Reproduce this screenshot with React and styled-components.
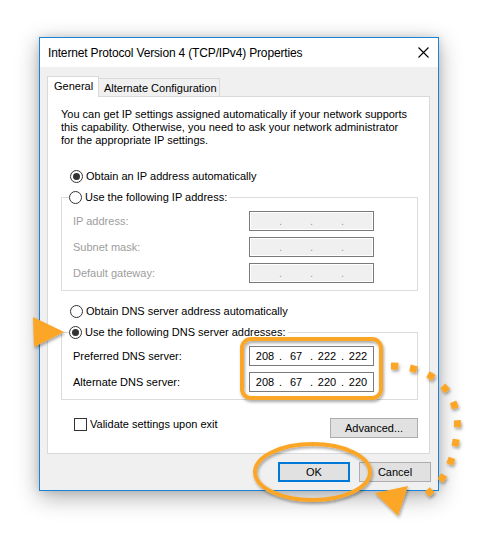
import React from "react";
import styled, { createGlobalStyle } from "styled-components";

const GlobalStyle = createGlobalStyle`
  html, body { margin: 0; padding: 0; background: #ffffff; }
  body {
    font-family: "Liberation Sans", Arial, sans-serif;
    font-size: 11px;
    color: #000;
  }
  * { box-sizing: border-box; }
`;

const ORANGE = "#fba626";

const Stage = styled.div`
  position: relative;
  width: 479px;
  height: 536px;
  overflow: hidden;
  padding: 37px 0 0 39px;
`;

const Window = styled.div`
  width: 400px;
  height: 454px;
  border: 1px solid #1883d7;
  background: #f0f0f0;
  box-shadow: 0 6px 22px rgba(0, 0, 0, 0.32), 0 0 8px rgba(0, 0, 0, 0.12);
  display: flex;
  flex-direction: column;
`;

const TitleBar = styled.div`
  height: 29px;
  flex: none;
  background: #ffffff;
  display: flex;
  align-items: center;
  justify-content: space-between;
  padding: 0 9px 0 8px;
`;

const Title = styled.span`
  font-size: 12px;
  letter-spacing: -0.16px;
  line-height: 14px;
  color: #000;
  white-space: nowrap;
`;

const CloseIcon = styled.svg`
  width: 11px;
  height: 11px;
  display: block;
`;

const Body = styled.div`
  flex: 1;
  display: flex;
  flex-direction: column;
  padding: 9px 8px 0 7px;
`;

const TabStrip = styled.div`
  display: flex;
  align-items: flex-end;
  height: 21px;
  position: relative;
  z-index: 1;
  margin-bottom: -1px;
`;

const Tab = styled.div`
  width: ${(p) => p.$w}px;
  height: ${(p) => (p.$active ? 21 : 18)}px;
  margin-bottom: ${(p) => (p.$active ? 0 : 1)}px;
  margin-left: ${(p) => (p.$active ? 0 : -1)}px;
  border: 1px solid #d9d9d9;
  border-bottom: none;
  background: ${(p) => (p.$active ? "#ffffff" : "#f0f0f0")};
  padding: ${(p) => (p.$active ? "2px 0 0 6px" : "2px 0 0 5px")};
  line-height: 14px;
  white-space: nowrap;
`;

const Panel = styled.div`
  height: 358px;
  border: 1px solid #d9d9d9;
  background: #ffffff;
  padding: 11px 11px 0 13px;
  display: flex;
  flex-direction: column;
`;

const Description = styled.p`
  margin: 0;
  line-height: 13px;
  white-space: nowrap;
`;

const RadioRow = styled.label`
  display: flex;
  align-items: center;
  height: 14px;
  margin-top: ${(p) => p.$mt || 0}px;
  margin-left: ${(p) => p.$ml || 0}px;
  white-space: nowrap;
  line-height: 14px;
`;

const RadioCircle = styled.span`
  width: 13px;
  height: 13px;
  border-radius: 50%;
  border: 1px solid #333;
  background: #fff;
  display: flex;
  align-items: center;
  justify-content: center;
  margin-right: 3px;
  flex: none;

  &::after {
    content: "";
    width: 7px;
    height: 7px;
    border-radius: 50%;
    background: ${(p) => (p.$checked ? "#333" : "transparent")};
  }
`;

const Group = styled.fieldset`
  margin: ${(p) => p.$mt || 0}px 0 0 0;
  padding: 0 0 7px 11px;
  border: 1px solid #dcdcdc;
  min-width: 0;
`;

const Legend = styled.legend`
  padding: 0 2px 0 0;
  margin-left: -4px;
  height: 14px;
`;

const FieldRow = styled.div`
  display: flex;
  align-items: center;
  justify-content: space-between;
  height: 20px;
  margin-top: ${(p) => (p.$first ? 7 : 6)}px;
`;

const FieldLabel = styled.span`
  color: ${(p) => (p.$disabled ? "#9d9d9d" : "#000")};
  white-space: nowrap;
`;

const IpBox = styled.div`
  width: 125px;
  height: 20px;
  margin-right: 43px;
  border: 1px solid #7a7a7a;
  background: ${(p) => (p.$disabled ? "#f0f0f0" : "#ffffff")};
  box-shadow: ${(p) => (p.$disabled ? "inset 0 0 0 1px #ffffff" : "none")};
  display: flex;
  align-items: center;
  color: ${(p) => (p.$disabled ? "#9d9d9d" : "#000")};
  line-height: 18px;
`;

const Octet = styled.span`
  flex: 1;
  text-align: center;
`;

const Dot = styled.span`
  width: 1px;
  display: flex;
  justify-content: center;
  overflow: visible;
`;

const BottomRow = styled.div`
  display: flex;
  justify-content: space-between;
  align-items: flex-start;
  margin-top: 18px;
  padding-left: 13px;
`;

const CheckLabel = styled.label`
  display: flex;
  align-items: center;
  height: 13px;
  line-height: 13px;
  white-space: nowrap;
`;

const CheckBox = styled.span`
  width: 13px;
  height: 13px;
  border: 1px solid #333;
  background: #fff;
  margin-right: 3px;
  flex: none;
`;

const Button = styled.button`
  width: ${(p) => p.$w || 72}px;
  height: 20px;
  padding: 0;
  font: inherit;
  font-size: 11px;
  color: #000;
  background: #e1e1e1;
  border: ${(p) => (p.$default ? "2px solid #0078d7" : "1px solid #adadad")};
`;

const ButtonBar = styled.div`
  display: flex;
  justify-content: flex-end;
  gap: 9px;
  margin-top: 8px;
  margin-right: -1px;
`;

const Overlay = styled.svg`
  position: absolute;
  left: 0;
  top: 0;
  width: 479px;
  height: 536px;
  pointer-events: none;
  z-index: 5;
`;

function Ip({ value, disabled }) {
  const parts = value ? value.split(".") : ["", "", "", ""];
  const out = [];
  parts.forEach((p, i) => {
    out.push(<Octet key={"o" + i}>{p}</Octet>);
    if (i < 3) out.push(<Dot key={"d" + i}>.</Dot>);
  });
  return <IpBox $disabled={disabled}>{out}</IpBox>;
}

export default function App() {
  return (
    <>
      <GlobalStyle />
      <Stage>
        <Window>
          <TitleBar>
            <Title>Internet Protocol Version 4 (TCP/IPv4) Properties</Title>
            <CloseIcon viewBox="0 0 11 11">
              <path d="M0.5 0.5 L10.5 10.5 M10.5 0.5 L0.5 10.5" stroke="#000" strokeWidth="1.1" fill="none" />
            </CloseIcon>
          </TitleBar>
          <Body>
            <TabStrip>
              <Tab $active $w={52}>General</Tab>
              <Tab $w={122}>Alternate Configuration</Tab>
            </TabStrip>
            <Panel>
              <Description>
                You can get IP settings assigned automatically if your network supports
                <br />
                this capability. Otherwise, you need to ask your network administrator
                <br />
                for the appropriate IP settings.
              </Description>

              <RadioRow $mt={22} $ml={9}>
                <RadioCircle $checked />
                Obtain an IP address automatically
              </RadioRow>

              <Group $mt={7}>
                <Legend>
                  <RadioRow>
                    <RadioCircle />
                    Use the following IP address:
                  </RadioRow>
                </Legend>
                <FieldRow $first>
                  <FieldLabel $disabled>IP address:</FieldLabel>
                  <Ip disabled />
                </FieldRow>
                <FieldRow>
                  <FieldLabel $disabled>Subnet mask:</FieldLabel>
                  <Ip disabled />
                </FieldRow>
                <FieldRow>
                  <FieldLabel $disabled>Default gateway:</FieldLabel>
                  <Ip disabled />
                </FieldRow>
              </Group>

              <RadioRow $mt={13} $ml={9}>
                <RadioCircle />
                Obtain DNS server address automatically
              </RadioRow>

              <Group $mt={7}>
                <Legend>
                  <RadioRow>
                    <RadioCircle $checked />
                    Use the following DNS server addresses:
                  </RadioRow>
                </Legend>
                <FieldRow $first>
                  <FieldLabel>Preferred DNS server:</FieldLabel>
                  <Ip value="208.67.222.222" />
                </FieldRow>
                <FieldRow>
                  <FieldLabel>Alternate DNS server:</FieldLabel>
                  <Ip value="208.67.220.220" />
                </FieldRow>
              </Group>

              <BottomRow>
                <CheckLabel>
                  <CheckBox />
                  Validate settings upon exit
                </CheckLabel>
                <Button $w={88}>Advanced...</Button>
              </BottomRow>
            </Panel>
            <ButtonBar>
              <Button $default>OK</Button>
              <Button>Cancel</Button>
            </ButtonBar>
          </Body>
        </Window>

        <Overlay viewBox="0 0 479 536">
          <defs>
            <filter id="sh" x="-20%" y="-20%" width="140%" height="140%">
              <feDropShadow dx="1" dy="2" stdDeviation="1.6" floodColor="#000" floodOpacity="0.35" />
            </filter>
          </defs>
          <g filter="url(#sh)">
            <polygon points="33,317 64,332 34,347" fill={ORANGE} />
            <rect x="242" y="339" width="139" height="59" rx="9" fill="none" stroke={ORANGE} strokeWidth="4" />
            <ellipse cx="312.5" cy="472" rx="57.5" ry="28" fill="none" stroke={ORANGE} strokeWidth="4" />
            <path
              d="M391 366 C 438 366 461 398 457 432 C 454 466 440 488 418 500"
              fill="none"
              stroke={ORANGE}
              strokeWidth="7"
              strokeDasharray="7 12"
            />
            <polygon points="375,493 408,486 398,516" fill={ORANGE} />
          </g>
        </Overlay>
      </Stage>
    </>
  );
}
